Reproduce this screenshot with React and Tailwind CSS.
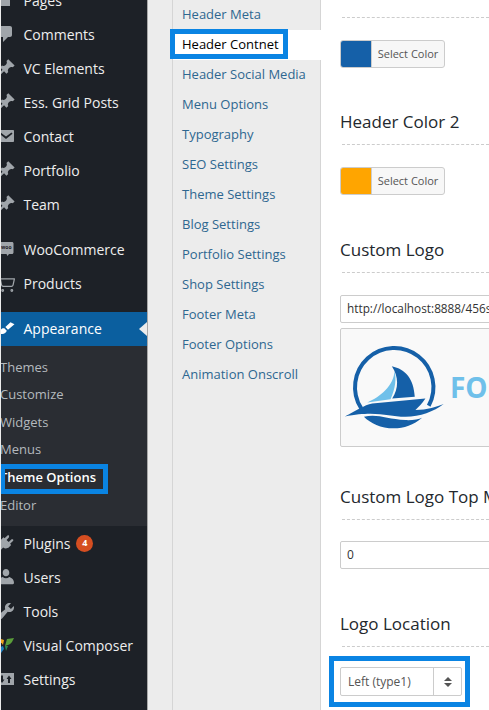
import { ShoppingCart } from 'lucide-react';

const FONT = { fontFamily: '"Open Sans", sans-serif' };

function Pin() {
  return (
    <svg viewBox="0 0 20 20" className="w-5 h-5" fill="#a0a5aa">
      <path d="M10.44 3.02l1.82-1.82 6.36 6.35-1.83 1.82c-1.05-.68-2.48-.57-3.41.36l-.75.75c-.92.93-1.04 2.35-.35 3.41l-1.83 1.82-2.41-2.41-2.8 2.79c-.42.42-3.38 2.71-3.8 2.29s1.86-3.39 2.28-3.81l2.79-2.79L4.1 9.36l1.83-1.82c1.05.69 2.48.57 3.4-.36l.75-.75c.93-.92 1.05-2.35.36-3.41z" />
    </svg>
  );
}

function Glyph({ d, fill = '#a0a5aa' }) {
  return (
    <svg viewBox="0 0 20 20" className="w-5 h-5" fill={fill}>
      <path d={d} fillRule="evenodd" />
    </svg>
  );
}

const icons = {
  pages: <Glyph d="M3 3h11v2H3zM3 7h11v9H3z" />,
  comment: <Glyph d="M5 2h9c1.1 0 2 .9 2 2v7c0 1.1-.9 2-2 2h-2l-5 5v-5H5c-1.1 0-2-.9-2-2V4c0-1.1.9-2 2-2z" />,
  pin: <Pin />,
  mail: <Glyph d="M3 4h14c.55 0 1 .45 1 1v10c0 .55-.45 1-1 1H3c-.55 0-1-.45-1-1V5c0-.55.45-1 1-1zm1.5 2.5L10 10.500l5.500-4 1 1.200L10 13 3.500 7.700z" />,
  woo: (
    <span className="relative block w-5 h-5">
      <svg viewBox="0 0 20 20" className="w-5 h-5" fill="#a0a5aa">
        <path d="M3 3h13c.8 0 1.500.7 1.500 1.500v9c0 .8-.7 1.500-1.500 1.500h-3l-1.500 2-1-2H3c-.8 0-1.500-.7-1.500-1.500v-9C1.500 3.700 2.200 3 3 3z" />
      </svg>
      <span className="absolute left-[5px] top-[5px] text-[5px] leading-[7px] font-bold text-[#1d2127]">woo</span>
    </span>
  ),
  cart: <ShoppingCart className="w-5 h-5 text-[#a0a5aa]" strokeWidth={1.5} />,
  brush: <Glyph fill="#ffffff" d="M14.480 3.300l4 1.900-6.500 5.600-2.600-2.700zM8.300 9.300l2.500 2.500c-.6 2-2.400 3.200-4.500 3.200-1.600 0-3.100-.5-4.300-1.500 1.300 0 2.200-.7 2.500-2 .4-1.600 2.100-2.600 3.800-2.200z" />,
  plug: <Glyph d="M13.110 4.360l-2.550 2.550 2.170 2.170 2.550-2.550c.5-.5 1.300-.5 1.800 0 .3.400.3 1-.1 1.400l-2.900 2.900 1.100 1.100-2 2c-1.700 1.700-4.200 1.900-6 .6l-3.300 3.300-2.300-2.300 3.300-3.300c-1.300-1.800-1.100-4.300.6-6l2-2 1.100 1.100 2.900-2.900c.4-.4 1-.4 1.400 0 .3.500.3 1.200-.1 1.700z" />,
  user: <Glyph d="M10 9.300c1.900 0 3.300-1.600 3.300-3.600S11.900 2 10 2 6.700 3.700 6.700 5.700s1.400 3.600 3.300 3.600zM18 15.900c0-3.500-2.700-5.200-4.800-5.800-.8.800-1.900 1.200-3.200 1.200s-2.400-.4-3.200-1.200C4.700 10.700 2 12.400 2 15.900c0 .9.900 1.300 2 1.300h12c1.100 0 2-.4 2-1.300z" />,
  wrench: <Glyph d="M16.680 9.770c-1.340 1.340-3.300 1.670-4.950.99l-5.410 6.520c-.99.990-2.590.990-3.570 0-.99-.98-.99-2.580 0-3.570l6.520-5.420c-.68-1.650-.35-3.610.99-4.950 1.280-1.280 3.120-1.620 4.720-1.060l-2.890 2.890 2.820 2.820 2.860-2.870c.53 1.610.19 3.390-1.090 4.650z" />,
  vc: (
    <svg viewBox="0 0 20 20" className="w-5 h-5">
      <path d="M2 3l6 2-1 5z" fill="#f1a51e" />
      <path d="M18 3l-7 1-2 7c3-1 6-2 7-4z" fill="#5a9e3a" />
      <path d="M9 11l3 0-2 5z" fill="#2d8a4e" />
      <path d="M7 11L2 13l3 5 3-4z" fill="#1e7fc0" />
    </svg>
  ),
  settings: <Glyph d="M2 4h16v12H2zM5 6.500v4H3.500L6 14l2.500-3.500H7v-4zM14 14v-4h1.500L13 6.500 10.500 10H12v4z" />,
};

function MenuRow({ icon, label, children, labelClass = '' }) {
  return (
    <div className="flex items-center h-[34px] text-[14px] text-[#eeeeee]">
      <span className="-ml-[5px] w-[27.500px] shrink-0">{icons[icon]}</span>
      <span className={labelClass}>{label}</span>
      {children}
    </div>
  );
}

function SubRow({ label, active }) {
  return (
    <div className={`h-[27.600px] flex items-center -ml-px text-[13px] ${active ? 'font-semibold text-white' : 'text-[#b4b9be]'}`}>
      {label}
    </div>
  );
}

function Sidebar() {
  return (
    <div className="w-[146px] shrink-0 ml-px h-full overflow-hidden bg-[#1d2127] relative">
      <div className="-mt-[17px]">
        {[
          ['pages', 'Pages'],
          ['comment', 'Comments'],
          ['pin', 'VC Elements'],
          ['pin', 'Ess. Grid Posts'],
          ['mail', 'Contact'],
          ['pin', 'Portfolio'],
          ['pin', 'Team'],
        ].map(([icon, label]) => <MenuRow key={label} icon={icon} label={label} />)}
      </div>
      <div className="mt-[11px]">
        <MenuRow icon="woo" label="WooCommerce" />
        <MenuRow icon="cart" label="Products" />
      </div>
      <div className="mt-[12px] bg-[#0b5f9f] relative">
        <MenuRow icon="brush" label="Appearance" labelClass="-mt-[2px] text-white">
          <span className="absolute right-0 top-[10px] border-y-[7px] border-r-[8px] border-y-transparent border-r-[#ececec]" />
        </MenuRow>
      </div>
      <div className="bg-[#2a2d33] h-[180px] pt-[7.600px] relative">
        {['Themes', 'Customize', 'Widgets', 'Menus'].map(l => <SubRow key={l} label={l} />)}
        <div className="relative">
          <SubRow label="Theme Options" active />
          <div className="absolute -left-px top-0 w-[108px] h-[30px] border-[5px] border-[#0a84e3]" />
        </div>
        <SubRow label="Editor" />
      </div>
      <MenuRow icon="plug" label="Plugins">
        <span className="ml-[6px] w-[17px] h-[17px] rounded-full bg-[#d54e21] text-white text-[9px] font-bold flex items-center justify-center">4</span>
      </MenuRow>
      <MenuRow icon="user" label="Users" />
      <MenuRow icon="wrench" label="Tools" />
      <MenuRow icon="vc" label="Visual Composer" />
      <MenuRow icon="settings" label="Settings" />
    </div>
  );
}

const TABS = ['Header Meta', 'Header Contnet', 'Header Social Media', 'Menu Options', 'Typography', 'SEO Settings', 'Theme Settings', 'Blog Settings', 'Portfolio Settings', 'Shop Settings', 'Footer Meta', 'Footer Options', 'Animation Onscroll'];

function Tabs() {
  return (
    <div className="w-[149px] shrink-0 h-full border-l border-r border-[#d5d5d5] bg-[#ececec] text-[13px] relative">
      {TABS.map(t => (
        t === 'Header Contnet' ? (
          <div key={t} className="relative h-[30px] -mr-px bg-white text-black flex items-center pl-[9px]">
            {t}
            <div className="absolute -left-[3px] -top-px w-[118px] h-[30px] border-[5px] border-[#0a84e3]" />
          </div>
        ) : (
          <div key={t} className="h-[30px] flex items-center pl-[9px] text-[#2e6790]">{t}</div>
        )
      ))}
    </div>
  );
}

function Heading({ children, className = '', gap = 'mt-[10px]' }) {
  return (
    <div className={className}>
      <div className="h-[24px] leading-[24px] text-[17px] text-[#23282d] whitespace-nowrap">{children}</div>
      <div className={`ml-[2px] ${gap} border-t border-dashed border-[#cccccc]`} />
    </div>
  );
}

function ColorButton({ color }) {
  return (
    <div className="mt-[22px] flex w-[105px] h-[28px] border border-[#cccccc] rounded-[3px] overflow-hidden bg-[#f7f7f7]">
      <span className="w-[30px]" style={{ background: color }} />
      <span className="flex-1 flex items-center justify-center text-[11px] text-[#555555] border-l border-[#cccccc]">Select Color</span>
    </div>
  );
}

function Logo() {
  return (
    <div className="mt-[5px] w-[300px] h-[119px] border border-[#cccccc] rounded-[2px] bg-[#f9f9f9] flex items-start pl-[3px] pt-[16px]">
      <svg viewBox="40 190 310 260" className="w-[103px] h-[87px] shrink-0">
        <path d="M92 380A118 118 0 1 1 295 372" fill="none" stroke="#1560a8" strokeWidth="12" />
        <path d="M192 268C190 310 150 345 110 362L180 352C195 320 198 290 192 268Z" fill="#6fc0ea" />
        <path d="M184 253C225 262 250 290 253 345L185 350C205 320 205 285 184 253Z" fill="#1560a8" />
        <path d="M42 404C80 385 100 370 125 365L285 350C275 365 265 375 255 385C290 385 320 375 340 367C310 390 270 405 225 405C170 405 140 385 42 404Z" fill="#1560a8" />
        <path d="M100 405C140 395 170 412 225 415C245 416 265 413 275 408C250 430 220 440 190 440C150 440 120 425 100 405Z" fill="#1560a8" />
      </svg>
      <span className="ml-[3px] mt-[24px] text-[28px] leading-[36px] font-bold text-[#6fc0ea]">FORTUNE</span>
    </div>
  );
}

function Content() {
  return (
    <div className="flex-1 min-w-0 h-full overflow-hidden bg-white pl-[20px] -ml-px">
      <Heading className="-mt-[19px]" gap="mt-[12px]">Header Color 1</Heading>
      <ColorButton color="#1560a8" />
      <Heading className="mt-[42px]">Header Color 2</Heading>
      <ColorButton color="#ffa500" />
      <Heading className="mt-[43px]">Custom Logo</Heading>
      <div className="mt-[22px] w-[300px] h-[28px] border border-[#cccccc] rounded-[2px] flex items-center pl-[6px] text-[11.800px] text-[#333333] whitespace-nowrap overflow-hidden">
        http://localhost:8888/456studio/wp-content/uploads/logo.png
      </div>
      <Logo />
      <Heading className="mt-[38px]">Custom Logo Top Margin</Heading>
      <div className="mt-[21px] w-[300px] h-[28px] border border-[#cccccc] rounded-[2px] flex items-center pl-[6px] text-[12px] text-[#333333]">0</div>
      <Heading className="mt-[43px]">Logo Location</Heading>
      <div className="relative mt-[20px] w-[122px] h-[29px] border border-[#cccccc] rounded-[2px] flex items-center text-[12px] text-[#555555]">
        <span className="flex-1 pl-[7px]">Left (type1)</span>
        <span className="w-[28px] h-full border-l border-[#cccccc] flex flex-col items-center justify-center gap-[2px]">
          <span className="border-x-[4px] border-b-[4px] border-x-transparent border-b-[#555555]" />
          <span className="border-x-[4px] border-t-[4px] border-x-transparent border-t-[#555555]" />
        </span>
        <div className="absolute -left-[12px] -top-[12px] w-[141px] h-[51px] border-[5px] border-[#0a84e3]" />
      </div>
    </div>
  );
}

export default function App() {
  return (
    <div className="flex w-[489px] h-[710px] overflow-hidden bg-[#ececec]" style={FONT}>
      <Sidebar />
      <div className="w-[25px] shrink-0 border-l border-[#a8a8a8]" />
      <Tabs />
      <Content />
    </div>
  );
}
